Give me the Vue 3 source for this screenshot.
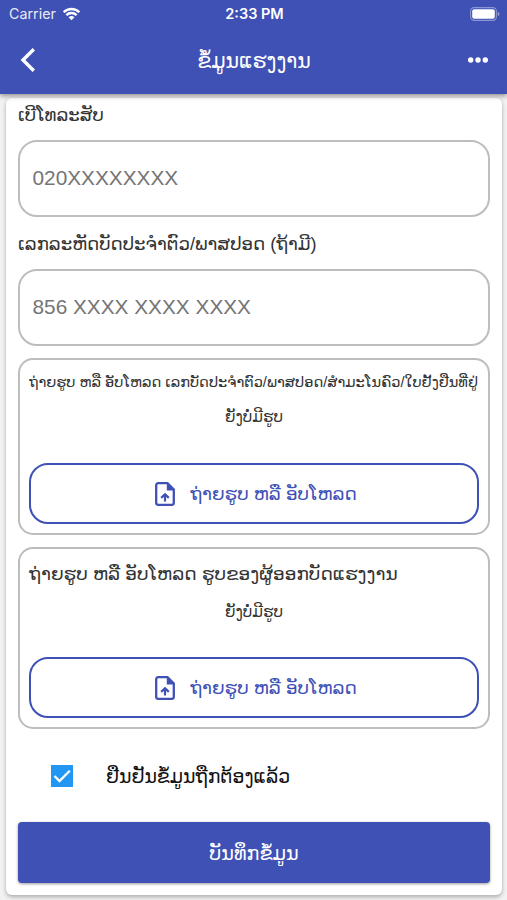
<template>
    <div class="screen">
        <header class="header">
            <div class="status_bar">
                <div class="carrier">
                    <span>Carrier</span>
                    <svg class="wifi" viewBox="0 0 20 15">
                        <path d="M1.6 5.6a12 12 0 0 1 16.8 0M4.5 8.7a7.8 7.8 0 0 1 11 0" fill="none" stroke="currentColor" stroke-width="2.5" />
                        <path d="M6.8 11.1a4.6 4.6 0 0 1 6.4 0L10 14.3z" fill="currentColor" />
                    </svg>
                </div>
                <span class="time">2:33 PM</span>
                <div class="battery_box">
                    <svg class="battery" viewBox="0 0 30 14">
                        <rect x="0.6" y="0.6" width="25.8" height="12.8" rx="3.6" fill="none" stroke="currentColor" stroke-opacity="0.4" stroke-width="1.1" />
                        <rect x="2.2" y="2.2" width="22.6" height="9.6" rx="2" fill="currentColor" />
                        <path d="M27.8 4.8v4.4q1.6-.7 1.6-2.2t-1.6-2.2z" fill="currentColor" fill-opacity="0.5" />
                    </svg>
                </div>
            </div>
            <div class="nav_bar">
                <svg class="back" viewBox="0 0 16 26">
                    <path d="M13.8 2.2 3 13l10.8 10.8" fill="none" stroke="currentColor" stroke-width="3.4" />
                </svg>
                <h1>ຂໍ້ມູນແຮງງານ</h1>
                <svg class="more" viewBox="0 0 20 6">
                    <circle cx="2.7" cy="3" r="2.7" fill="currentColor" />
                    <circle cx="10" cy="3" r="2.7" fill="currentColor" />
                    <circle cx="17.3" cy="3" r="2.7" fill="currentColor" />
                </svg>
            </div>
        </header>

        <form class="card" @submit.prevent>
            <label class="field_label" for="phone">ເບີໂທລະສັບ</label>
            <input id="phone" v-model="phone" class="field phone" placeholder="020XXXXXXXX" />

            <label class="field_label" for="idCard">ເລກລະຫັດບັດປະຈຳຕົວ/ພາສປອດ (ຖ້າມີ)</label>
            <input id="idCard" v-model="idCard" class="field" placeholder="856 XXXX XXXX XXXX" />

            <section v-for="item in uploads" :key="item.name" :class="['upload_box', item.name]">
                <p class="upload_title">{{ item.title }}</p>
                <p class="upload_empty">ຍັງບໍ່ມີຮູບ</p>
                <button type="button" class="upload_btn">
                    <svg class="file_icon" viewBox="0 0 20 24">
                        <path d="M12.5 1.2H3.2a2 2 0 0 0-2 2v17.6a2 2 0 0 0 2 2h13.6a2 2 0 0 0 2-2V7.5z" fill="none" stroke="currentColor" stroke-width="2.3" />
                        <path d="M11.8 1v7.4H19z" fill="currentColor" />
                        <path d="M10 19.5V13M6.2 15.9 10 12.200l3.8 3.7" fill="none" stroke="currentColor" stroke-width="2.2" />
                    </svg>
                    <span>ຖ່າຍຮູບ ຫລື ອັບໂຫລດ</span>
                </button>
            </section>

            <label class="confirm">
                <input v-model="confirmed" type="checkbox" hidden />
                <span class="checkbox">
                    <svg v-if="confirmed" viewBox="0 0 22 22">
                        <path d="m3.5 11 5 5L18.8 5.7" fill="none" stroke="#fff" stroke-width="2.3" />
                    </svg>
                </span>
                <span class="confirm_text">ຢືນຢັນຂໍ້ມູນຖືກຕ້ອງແລ້ວ</span>
            </label>

            <button type="submit" class="save_btn">ບັນທຶກຂໍ້ມູນ</button>
        </form>
    </div>
</template>
<script setup>
import { ref } from "vue";

const phone = ref("");
const idCard = ref("");
const confirmed = ref(true);

// the two photos needed to register
const uploads = [
    { name: "identity", title: "ຖ່າຍຮູບ ຫລື ອັບໂຫລດ ເລກບັດປະຈຳຕົວ/ພາສປອດ/ສຳມະໂນຄົວ/ໃບຢັ້ງຢືນທີ່ຢູ່" },
    { name: "portrait", title: "ຖ່າຍຮູບ ຫລື ອັບໂຫລດ ຮູບຂອງຜູ້ອອກບັດແຮງງານ" },
];
</script>
<style>
body {
    background: #f2f2f2;
}
</style>
<style scoped>
* {
    box-sizing: border-box;
}

.screen {
    height: 900px;
    overflow: hidden;
    background: #f2f2f2;
    font-family: "Liberation Sans", "DejaVu Sans", sans-serif;
    color: #333;
    white-space: nowrap;
}

.header {
    position: relative;
    height: 94px;
    color: white;
    background: #3f51b5;
    box-shadow: 0 2px 5px rgba(0, 0, 0, 0.4);
}

.status_bar {
    display: grid;
    grid-template-columns: 1fr auto 1fr;
    align-items: center;
    height: 27px;
    padding: 0 7px 0 9px;
    font-family: Inter, sans-serif;
    font-size: 14.3px;
}

.carrier {
    display: flex;
    align-items: center;
    gap: 6px;
    color: rgba(255, 255, 255, 0.9);
}

.wifi {
    width: 19px;
    height: 14px;
    color: white;
}

.time {
    font-size: 14.5px;
    font-weight: 600;
}

.battery_box {
    display: flex;
    justify-content: flex-end;
}

.battery {
    width: 30px;
    height: 14px;
}

.nav_bar {
    display: flex;
    align-items: center;
    justify-content: space-between;
    height: 66px;
    padding: 0 19px 0 20px;
}

.back {
    width: 16px;
    height: 26px;
}

.more {
    width: 20px;
    height: 6px;
}

h1 {
    margin: 0 0 0 4px;
    padding-top: 2px;
    font-size: 20.5px;
    font-weight: normal;
    line-height: 30px;
}

.card {
    display: flex;
    flex-direction: column;
    width: 496px;
    height: 797px;
    margin: 4px 0 0 6px;
    padding: 0 12px 12px;
    background: white;
    border-radius: 6px;
    box-shadow: 0 2px 4px rgba(0, 0, 0, 0.3);
}

.field_label {
    height: 42px;
    font-size: 18.2px;
    line-height: 35px;
}

.field {
    height: 77px;
    padding: 0 12.5px 2px;
    border: 2px solid #bdbdbd;
    border-radius: 19px;
    outline: none;
    background: white;
    font: 20.8px "Liberation Sans", sans-serif;
    color: #333;
}

.field::placeholder {
    color: #757575;
    opacity: 1;
}

.phone {
    margin-bottom: 10px;
}

.upload_box {
    display: flex;
    flex-direction: column;
    height: 177px;
    margin-top: 12px;
    padding: 0 9px 9px;
    border: 2px solid #bdbdbd;
    border-radius: 15px;
}

.portrait {
    height: 182px;
}

.upload_title {
    height: 40px;
    margin: 0;
    font-size: 14.6px;
    line-height: 44px;
}

.portrait .upload_title {
    font-size: 18.5px;
    height: 46px;
    line-height: 50px;
}

.upload_empty {
    margin: 0;
    font-size: 15.2px;
    line-height: 34px;
    text-align: center;
}

.upload_btn {
    display: flex;
    align-items: center;
    justify-content: center;
    gap: 15px;
    height: 61px;
    margin-top: auto;
    padding: 1px 0 0 4px;
    border: 2.5px solid #3f51b5;
    border-radius: 19px;
    background: white;
    color: #3f51b5;
    font-family: inherit;
    font-size: 18.4px;
}

.file_icon {
    width: 20px;
    height: 24px;
}

.confirm {
    display: flex;
    align-items: center;
    gap: 33px;
    height: 93px;
    padding-left: 33px;
    font-size: 18.9px;
    color: #111;
}

.confirm_text {
    padding-top: 2px;
}

.checkbox {
    width: 22px;
    height: 22px;
    background: #2196f3;
}

.checkbox svg {
    display: block;
}

.save_btn {
    flex: none;
    height: 61px;
    margin-top: auto;
    padding-top: 3px;
    border: none;
    border-radius: 4px;
    background: #3f51b5;
    color: white;
    font-family: inherit;
    font-size: 19.2px;
    box-shadow: 0 1px 3px rgba(0, 0, 0, 0.4);
}
</style>
